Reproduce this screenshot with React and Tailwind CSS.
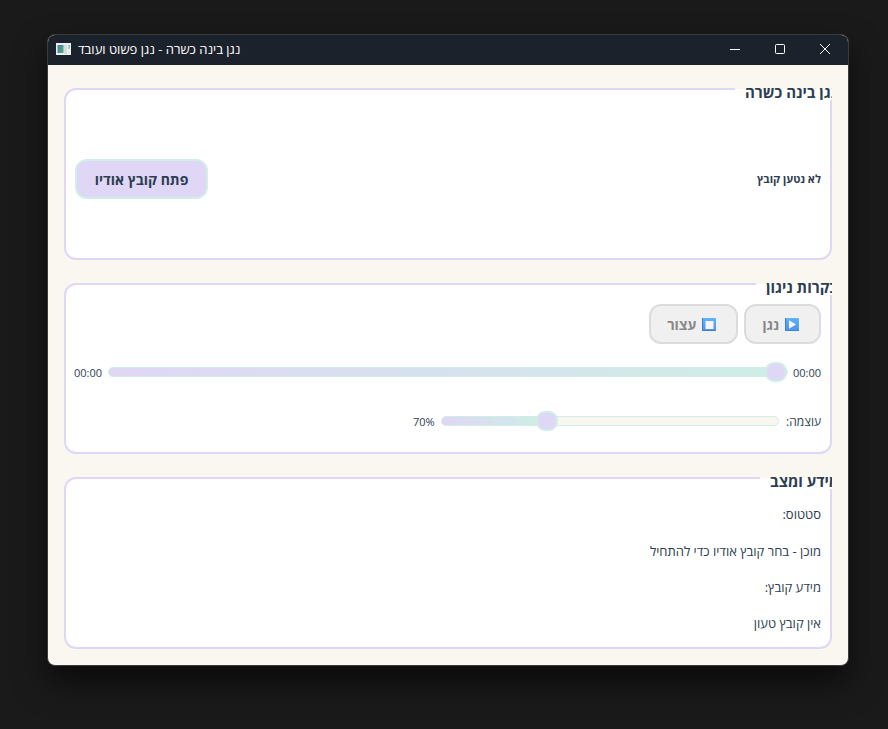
import { useState } from "react";

const sliderClass =
  "block h-5 min-w-0 appearance-none bg-transparent outline-none " +
  "[&::-webkit-slider-runnable-track]:h-[10px] [&::-webkit-slider-runnable-track]:rounded-[5px] " +
  "[&::-webkit-slider-runnable-track]:border [&::-webkit-slider-runnable-track]:border-[#ceeee6] " +
  "[&::-webkit-slider-runnable-track]:bg-[linear-gradient(to_right,#e0d6f5,#ceeee6_var(--fill),#faf7f0_var(--fill))] " +
  "[&::-webkit-slider-thumb]:mt-[-6px] [&::-webkit-slider-thumb]:h-5 [&::-webkit-slider-thumb]:w-[22px] " +
  "[&::-webkit-slider-thumb]:appearance-none [&::-webkit-slider-thumb]:rounded-[9px] " +
  "[&::-webkit-slider-thumb]:border-2 [&::-webkit-slider-thumb]:border-[#ceeee6] [&::-webkit-slider-thumb]:bg-[#e0d6f5]";

function Slider({ id, label, value, onChange }) {
  return (
    <input
      id={id}
      type="range"
      min="0"
      max="100"
      dir="rtl"
      aria-label={label}
      value={value}
      onChange={(e) => onChange(Number(e.target.value))}
      className={`${sliderClass} w-0 flex-1`}
      style={{ "--fill": `${100 - value}%` }}
    />
  );
}

function Group({ title, titleWidth, className, children }) {
  return (
    <section
      className={`relative flex flex-col rounded-[12px] border-2 border-[#e0d6f5] bg-white px-[9px] ${className}`}
    >
      <div dir="ltr" className={`absolute -top-[2px] -right-[2px] h-3 overflow-hidden bg-[linear-gradient(to_bottom,#faf7f0_1px,white_1px)] pl-[10px] ${titleWidth}`}>
        <h2 dir="rtl" className="-mt-[6px] w-max text-[15px] leading-5 font-bold whitespace-nowrap">
          {title}
        </h2>
      </div>
      {children}
    </section>
  );
}

function EmojiTile({ children }) {
  return (
    <svg viewBox="0 0 14 14" className="h-[14px] w-[14px] shrink-0" aria-hidden="true">
      <defs>
        <linearGradient id="tile" x1="0" y1="0" x2="0" y2="1">
          <stop offset="0" stopColor="#5cb3fb" />
          <stop offset="1" stopColor="#4a94ee" />
        </linearGradient>
      </defs>
      <rect width="14" height="13" rx="1" fill="url(#tile)" />
      <path d="M.5 0v12.5H14" fill="none" stroke="#3f7fd2" />
      {children}
    </svg>
  );
}

function TransportButton({ label, icon }) {
  return (
    <button
      type="button"
      className="flex h-10 items-center rounded-[12px] border-2 border-[#dcdcdc] bg-[#f0f0f0] px-4 pt-[2px] text-[14px] leading-5 font-bold text-[#888]"
    >
      <span className="mr-1 ml-[6px] flex">{icon}</span>
      {label}
    </button>
  );
}

function TitleBar() {
  return (
    <header dir="ltr" className="flex h-[30px] shrink-0 items-center bg-[#1c222c] pb-[2px] pl-2 text-white">
      <svg viewBox="0 0 15 12" className="h-3 w-[15px]" aria-hidden="true">
        <defs>
          <linearGradient id="app" x1="0" y1="0" x2="1" y2="1">
            <stop offset="0" stopColor="#4c7da8" />
            <stop offset="1" stopColor="#4fae74" />
          </linearGradient>
        </defs>
        <rect width="15" height="12" fill="#eceff1" />
        <rect x="1.5" y="2" width="6" height="8" fill="url(#app)" />
        <rect x="8" y="2" width="3" height="9" fill="#d9dcdf" />
        <path d="M12 2h2v4z" fill="#86b7c9" />
        <path d="M12 3l2 3v0h-2z" fill="#a9d3b0" />
      </svg>
      <h1 dir="rtl" className="ml-[7px] text-[13px] leading-4">
        נגן בינה כשרה - נגן פשוט ועובד
      </h1>
      <div className="ml-auto flex h-full">
        <button type="button" aria-label="מזעור" className="grid w-[46px] place-items-center">
          <svg viewBox="0 0 12 12" className="h-3 w-3" fill="none" stroke="white">
            <path d="M1 6.5h10" />
          </svg>
        </button>
        <button type="button" aria-label="הגדלה" className="grid w-11 place-items-center">
          <svg viewBox="0 0 12 12" className="h-3 w-3" fill="none" stroke="white">
            <rect x="1.5" y="1.5" width="9" height="9" rx="1" />
          </svg>
        </button>
        <button type="button" aria-label="סגירה" className="grid w-[46px] place-items-center">
          <svg viewBox="0 0 12 12" className="h-3 w-3" fill="none" stroke="white">
            <path d="M1 1l10 10M11 1L1 11" />
          </svg>
        </button>
      </div>
    </header>
  );
}

export default function App() {
  const [position, setPosition] = useState(0);
  const [volume, setVolume] = useState(70);

  return (
    <div className="flex min-h-screen flex-col bg-[#1a1a1a] pt-[34px] pr-[39px] pb-[63px] pl-[47px] font-['Open_Sans','Noto_Sans',sans-serif] text-[12px] leading-4 text-[#2c3e50]">
      <div
        dir="rtl"
        className="flex flex-1 flex-col overflow-hidden rounded-[8px] border border-[#3b3b3b] bg-[#faf7f0] shadow-[0_16px_32px_rgba(0,0,0,0.6)]"
      >
        <TitleBar />
        <main className="grid flex-1 grid-rows-3 gap-[23px] px-4 pt-[23px] pb-4">
          <Group title="נגן בינה כשרה" titleWidth="w-[97px]" className="pt-[19px] pb-[9px]">
            <div className="flex flex-1 items-center justify-between">
              <p className="text-[11px] font-bold">לא נטען קובץ</p>
              <button
                type="button"
                className="h-10 min-w-[133px] rounded-[12px] border-2 border-[#ceeee6] bg-[#e0d6f5] px-4 pt-[2px] text-[14px] leading-5 font-bold"
              >
                פתח קובץ אודיו
              </button>
            </div>
          </Group>

          <Group title="בקרות ניגון" titleWidth="w-[76px]" className="pt-[19px] pb-[21px]">
            <div className="flex gap-[6px]">
              <TransportButton
                label="נגן"
                icon={
                  <EmojiTile>
                    <path d="M4 2.2v8.6l7-4.3z" fill="#fdf3fd" />
                  </EmojiTile>
                }
              />
              <TransportButton
                label="עצור"
                icon={
                  <EmojiTile>
                    <rect x="3.5" y="3" width="8" height="8" rx=".5" fill="#fdf3fd" />
                  </EmojiTile>
                }
              />
            </div>
            <div className="mt-[18px] flex h-5 items-center gap-[6px] text-[11px]">
              <span className="w-[27px] pt-[2px]">00:00</span>
              <Slider id="position" label="מיקום" value={position} onChange={setPosition} />
              <span className="w-[27px] pt-[2px]">00:00</span>
            </div>
            <div className="mt-[29px] flex h-5 items-center">
              <label htmlFor="volume" className="ml-[6px] w-9 pt-[2px] whitespace-nowrap">
                עוצמה:
              </label>
              <Slider id="volume" label="עוצמה" value={volume} onChange={setVolume} />
              <output htmlFor="volume" dir="ltr" className="mr-[6px] w-[22px] pt-[2px] text-[11px]">
                {volume}%
              </output>
              <div className="flex-1" />
            </div>
          </Group>

          <Group title="מידע ומצב" titleWidth="w-[72px]" className="pt-[17px] pb-[6px] text-[13px]">
            <p className="flex flex-1 items-center">סטטוס:</p>
            <p className="flex flex-1 items-center">מוכן - בחר קובץ אודיו כדי להתחיל</p>
            <p className="flex flex-1 items-center">מידע קובץ:</p>
            <p className="flex flex-1 items-center">אין קובץ טעון</p>
          </Group>
        </main>
      </div>
    </div>
  );
}
